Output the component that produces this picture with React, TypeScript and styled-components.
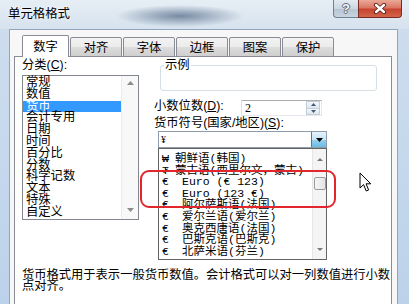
import React from 'react';
import styled, { createGlobalStyle } from 'styled-components';

const UI = `"Liberation Sans", "Noto Sans CJK SC", sans-serif`;
const SONG = `"Liberation Serif", "Noto Sans CJK SC", serif`;
const MONO = `"Liberation Mono", "Noto Sans CJK SC", monospace`;

const GlobalStyle = createGlobalStyle`
  html, body { margin: 0; padding: 0; }
  body { width: 409px; height: 304px; overflow: hidden; background: #fff; }
  * { box-sizing: border-box; }
`;

const categories = ['常规', '数值', '货币', '会计专用', '日期', '时间', '百分比', '分数', '科学记数', '文本', '特殊', '自定义'];

const currencies: [string, string, number][] = [
  ['₩', '朝鲜语(韩国)', 13],
  ['₮', '蒙古语(西里尔文，蒙古)', 13],
  ['€', 'Euro (€ 123)', 20],
  ['€', 'Euro (123 €)', 20],
  ['€', '阿尔萨斯语(法国)', 20],
  ['€', '爱尔兰语(爱尔兰)', 20],
  ['€', '奥克西唐语(法国)', 20],
  ['€', '巴斯克语(巴斯克)', 20],
  ['€', '北萨米语(芬兰)', 20],
];

const tabs = ['数字', '对齐', '字体', '边框', '图案', '保护'];

const Tri = ({ up, color = '#8c8c8c', w = 7, h = 4 }: { up?: boolean; color?: string; w?: number; h?: number }) => (
  <svg width={w} height={h} viewBox={`0 0 ${w} ${h}`}>
    <path d={up ? `M0 ${h} L${w / 2} 0 L${w} ${h} Z` : `M0 0 L${w} 0 L${w / 2} ${h} Z`} fill={color} />
  </svg>
);

const CloseGlyph = () => (
  <svg width="14" height="11" viewBox="0 0 14 11">
    <path d="M3 2 L11 9 M11 2 L3 9" stroke="#5a2019" strokeWidth="4.2" strokeLinecap="round" />
    <path d="M3 2 L11 9 M11 2 L3 9" stroke="#fff" strokeWidth="2.4" strokeLinecap="round" />
  </svg>
);

const Cursor = () => (
  <svg width="13" height="21" viewBox="0 0 13 21">
    <path d="M1 1 L1 16 L4.6 12.6 L7.2 19 L9.6 18 L7.1 11.8 L11.8 11.8 Z" fill="#fff" stroke="#000" strokeWidth="1" strokeLinejoin="round" />
  </svg>
);

export default function App() {
  return (
    <>
      <GlobalStyle />
      <Window>
        <TitleBar>
          <Title>单元格格式</Title>
          <Caption>
            <HelpBtn>?</HelpBtn>
            <CloseBtn><CloseGlyph /></CloseBtn>
          </Caption>
        </TitleBar>
        <Frame>
          <Client>
            <TabStrip>
              {tabs.map((t, i) => (
                <Tab key={t} $active={i === 0}>{t}</Tab>
              ))}
            </TabStrip>
            <Panel>
              <Grid>
                <LeftCol>
                  <Label>分类(<u>C</u>):</Label>
                  <ListBox>
                    <ListItems>
                      {categories.map((c) => (
                        <ListItem key={c} $selected={c === '货币'}>{c}</ListItem>
                      ))}
                    </ListItems>
                    <ListScroll>
                      <Tri up />
                      <Tri />
                    </ListScroll>
                  </ListBox>
                </LeftCol>
                <RightCol>
                  <Sample>
                    <legend>示例</legend>
                    <SampleBody />
                  </Sample>
                  <DecimalRow>
                    <RowLabel>小数位数(<u>D</u>):</RowLabel>
                    <Spinner>
                      <SpinValue>2</SpinValue>
                      <SpinButtons>
                        <SpinBtn><Tri up color="#3d5a7a" w={5} h={3} /></SpinBtn>
                        <SpinBtn><Tri color="#3d5a7a" w={5} h={3} /></SpinBtn>
                      </SpinButtons>
                    </Spinner>
                  </DecimalRow>
                  <Label>货币符号(国家/地区)(<u>S</u>):</Label>
                  <Combo>
                    <ComboValue>¥</ComboValue>
                    <ComboBtn><Tri color="#000" w={7} h={4} /></ComboBtn>
                  </Combo>
                  <DropList>
                    <DropItems>
                      {currencies.map(([s, n, w], i) => (
                        <DropItem key={i}>
                          <Sym style={{ width: w }}>{s}</Sym>
                          {n}
                        </DropItem>
                      ))}
                    </DropItems>
                    <DropScroll>
                      <Tri up color="#7a7a7a" w={6} h={3} />
                      <Thumb />
                      <Gap />
                      <Tri color="#7a7a7a" w={6} h={3} />
                    </DropScroll>
                  </DropList>
                </RightCol>
                <Description>
                  货币格式用于表示一般货币数值。会计格式可以对一列数值进行小数
                  <br />
                  点对齐。
                </Description>
              </Grid>
            </Panel>
          </Client>
        </Frame>
        <Annotation />
        <Pointer><Cursor /></Pointer>
      </Window>
    </>
  );
}

const Window = styled.div`
  position: relative;
  width: 409px;
  height: 304px;
  overflow: hidden;
  display: flex;
  flex-direction: column;
  background: linear-gradient(180deg, #cfdeee 0%, #bcd2ea 100%);
  font-family: ${UI};
  color: #000;
`;

const TitleBar = styled.div`
  height: 29px;
  flex: none;
  display: flex;
  align-items: flex-start;
  background:
    radial-gradient(ellipse 64px 11px at 180px 16px, rgba(100, 122, 148, 0.85), rgba(140, 160, 182, 0) 100%),
    linear-gradient(180deg, #e7eef5 0%, #d6e2ee 100%);
`;

const Title = styled.div`
  padding: 7px 0 0 8px;
  font-size: 12.4px;
  line-height: 14px;
  text-shadow: 0 0 4px #fff;
`;

const Caption = styled.div`
  margin-left: auto;
  margin-right: 7px;
  display: flex;
`;

const HelpBtn = styled.div`
  width: 25px;
  height: 18px;
  border: 1px solid #6e8093;
  border-top: none;
  border-right: none;
  border-radius: 0 0 0 4px;
  background: linear-gradient(180deg, #e3eaf1 0%, #ccd7e2 50%, #b6c4d2 51%, #c8d4df 100%);
  display: flex;
  align-items: center;
  justify-content: center;
  font: bold 13px ${UI};
  color: #f4f6f8;
  text-shadow: 1px 0 0 #5d6a78, -1px 0 0 #5d6a78, 0 1px 0 #5d6a78, 0 -1px 0 #5d6a78;
`;

const CloseBtn = styled.div`
  width: 44px;
  height: 18px;
  border: 1px solid #7a2b22;
  border-top: none;
  border-radius: 0 0 4px 0;
  background: linear-gradient(180deg, #eaa898 0%, #d97461 48%, #c6412d 52%, #d2654b 100%);
  display: flex;
  align-items: center;
  justify-content: center;
`;

const Frame = styled.div`
  flex: 1;
  display: flex;
  padding: 0 11px 0 9px;
  min-height: 0;
`;

const Client = styled.div`
  flex: 1;
  display: flex;
  flex-direction: column;
  background: #f7f7f7;
  border: 1px solid #93a5b9;
  border-bottom: none;
  padding-top: 5px;
  min-height: 0;
`;

const TabStrip = styled.div`
  position: relative;
  z-index: 1;
  display: flex;
  align-items: flex-end;
  height: 22px;
  margin: 0 0 -1px 12px;
`;

const Tab = styled.div<{ $active?: boolean }>`
  width: ${(p) => (p.$active ? 47 : 52)}px;
  height: ${(p) => (p.$active ? 22 : 20)}px;
  margin-left: ${(p) => (p.$active ? 0 : 1)}px;
  border: 1px solid #898c95;
  border-bottom: ${(p) => (p.$active ? 'none' : '1px solid #898c95')};
  border-radius: 2px 2px 0 0;
  background: ${(p) => (p.$active ? '#fff' : 'linear-gradient(180deg, #f3f3f3 0%, #ebebeb 50%, #dddddd 51%, #cfcfcf 100%)')};
  display: flex;
  align-items: center;
  justify-content: center;
  font-size: 12.3px;
  line-height: 14px;
  padding-top: ${(p) => (p.$active ? 0 : 1)}px;
`;

const Panel = styled.div`
  flex: 1;
  margin: 0 5px 0 4px;
  background: #fff;
  border: 1px solid #898c95;
  border-bottom: none;
  min-height: 260px;
`;

const Grid = styled.div`
  display: grid;
  grid-template-columns: 117px 1fr;
  column-gap: 15px;
  padding: 1px 0 0 7px;
`;

const LeftCol = styled.div`
  display: flex;
  flex-direction: column;
`;

const Label = styled.div`
  font-size: 12.3px;
  line-height: 14px;
  height: 14px;
  white-space: nowrap;
  u { text-decoration-thickness: 1px; }
`;

const ListBox = styled.div`
  margin-top: 3px;
  height: 145px;
  border: 1px solid #828790;
  display: flex;
  background: #fff;
`;

const ListItems = styled.div`
  flex: 1;
  padding-top: 1px;
`;

const ListItem = styled.div<{ $selected?: boolean }>`
  height: 11.8px;
  line-height: 11.8px;
  font-size: 12.3px;
  padding-left: 3px;
  white-space: nowrap;
  background: ${(p) => (p.$selected ? '#3399ff' : 'transparent')};
  color: ${(p) => (p.$selected ? '#fff' : '#000')};
`;

const ListScroll = styled.div`
  width: 17px;
  background: #f8f8f8;
  border-left: 1px solid #ececec;
  display: flex;
  flex-direction: column;
  justify-content: space-between;
  align-items: center;
  padding: 5px 0 7px;
`;

const RightCol = styled.div`
  display: flex;
  flex-direction: column;
`;

const Sample = styled.fieldset`
  margin: 0 0 0 6px;
  padding: 0;
  width: 217px;
  border: 1px solid #d5dfe5;
  border-radius: 3px;
  legend {
    padding: 0 1px;
    margin-left: 3px;
    font-size: 12.3px;
    line-height: 14px;
  }
`;

const SampleBody = styled.div`
  height: 18px;
`;

const DecimalRow = styled.div`
  display: flex;
  align-items: flex-start;
  margin-top: 9px;
  height: 16px;
`;

const RowLabel = styled.div`
  width: 87px;
  font-size: 12.3px;
  line-height: 12px;
  white-space: nowrap;
`;

const Spinner = styled.div`
  width: 81px;
  height: 16px;
  display: flex;
  border: 1px solid #abadb3;
  border-left-color: #dbdfe6;
  border-right-color: #e3e9ef;
  border-bottom-color: #e3e9ef;
  background: #fff;
`;

const SpinValue = styled.div`
  flex: 1;
  padding-left: 3px;
  font: 12px/14px ${SONG};
`;

const SpinButtons = styled.div`
  width: 14px;
  display: flex;
  flex-direction: column;
  margin-right: 1px;
`;

const SpinBtn = styled.div`
  flex: 1;
  display: flex;
  align-items: center;
  justify-content: center;
  background: linear-gradient(180deg, #f4f7fa 0%, #dde6ef 100%);
  border: 1px solid #c4ced9;
  & + & { border-top: none; }
`;

const Combo = styled.div`
  margin: 1px 0 0 4px;
  width: 169px;
  height: 17px;
  display: flex;
  border: 1px solid #8e9cae;
  background: #fff;
`;

const ComboValue = styled.div`
  flex: 1;
  padding-left: 2px;
  font: 10px/15px ${SONG};
`;

const ComboBtn = styled.div`
  width: 15px;
  display: flex;
  align-items: center;
  justify-content: center;
  border-left: 1px solid #3c7fb1;
  background: linear-gradient(180deg, #e5f4fc 0%, #c4e5f6 50%, #98d1ef 51%, #6cbbe3 100%);
`;

const DropList = styled.div`
  margin-left: 4px;
  width: 169px;
  height: 112px;
  display: flex;
  border: 1px solid #646464;
  background: #fff;
`;

const DropItems = styled.div`
  flex: 1;
  padding-top: 4px;
  overflow: hidden;
`;

const DropItem = styled.div`
  display: flex;
  height: 11.6px;
  line-height: 11.6px;
  padding-left: 3px;
  font-family: ${MONO};
  font-size: 11.5px;
  white-space: nowrap;
`;

const Sym = styled.span`
  flex: none;
`;

const DropScroll = styled.div`
  width: 14px;
  background: #f4f4f4;
  border-left: 1px solid #e6e6e6;
  display: flex;
  flex-direction: column;
  align-items: center;
  padding: 9px 0 8px;
`;

const Thumb = styled.div`
  margin-top: 16px;
  width: 12px;
  height: 13px;
  border: 1px solid #9a9a9a;
  border-radius: 2px;
  background: linear-gradient(90deg, #f6f6f6 0%, #e4e4e4 100%);
`;

const Gap = styled.div`
  flex: 1;
`;

const Description = styled.div`
  grid-column: 1 / -1;
  margin-top: 10px;
  font-size: 12.27px;
  line-height: 11px;
  white-space: nowrap;
`;

const Annotation = styled.div`
  position: absolute;
  left: 140px;
  top: 170px;
  width: 196px;
  height: 38px;
  border: 2px solid #e3262b;
  border-radius: 9px;
  pointer-events: none;
`;

const Pointer = styled.div`
  position: absolute;
  left: 359px;
  top: 172px;
  width: 13px;
  height: 21px;
  line-height: 0;
`;
